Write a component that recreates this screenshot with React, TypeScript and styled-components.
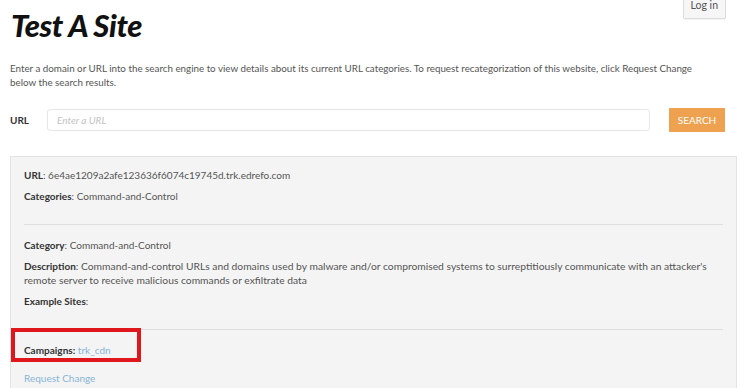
import styled, { createGlobalStyle } from 'styled-components';

const GlobalStyle = createGlobalStyle`
  body {
    margin: 0;
    background: #fff;
    font-family: Lato, "Open Sans", sans-serif;
    color: #555;
  }
`;

const Page = styled.div`
  padding: 0 8px 0 10px;
  overflow: hidden;
  height: 388px;
`;

const Header = styled.div`
  display: flex;
  justify-content: space-between;
  align-items: flex-start;
  padding-right: 11px;
`;

const Title = styled.h1`
  margin: 6px 0 0 1px;
  font-size: 31px;
  line-height: 38px;
  font-weight: 900;
  font-style: italic;
  letter-spacing: -0.4px;
  color: #111;
`;

const LogIn = styled.button`
  display: flex;
  align-items: flex-end;
  margin-top: -14px;
  height: 33px;
  padding: 0 7px 7px;
  border: 1px solid #dcdcdc;
  border-radius: 2px;
  background: #f6f6f6;
  box-shadow: 0 1px 1px rgba(0, 0, 0, 0.05);
  font-family: inherit;
  font-size: 10.5px;
  color: #555;
`;

const Intro = styled.p`
  margin: 17px 0 0;
  max-width: 700px;
  font-size: 9.8px;
  line-height: 14px;
  color: #555;
`;

const SearchRow = styled.div`
  display: flex;
  align-items: center;
  margin-top: 19px;
  padding-right: 12px;
`;

const Label = styled.label`
  width: 37px;
  font-size: 10px;
  font-weight: 700;
  color: #333;
`;

const UrlInput = styled.input`
  flex: 1;
  height: 22px;
  box-sizing: border-box;
  padding: 0 9px;
  border: 1px solid #e6e6e6;
  border-radius: 3px;
  font-family: inherit;
  font-size: 10px;
  &::placeholder {
    color: #c4c4c4;
    font-style: italic;
  }
`;

const SearchButton = styled.button`
  margin-left: 19px;
  width: 56px;
  height: 24px;
  border: none;
  border-radius: 1px;
  background: #eea24f;
  color: #fff;
  font-family: inherit;
  font-size: 10px;
  text-transform: uppercase;
`;

const Panel = styled.div`
  margin-top: 24px;
  padding: 11px 13px 20px;
  background: #f4f4f4;
  border: 1px solid #e4e4e4;
`;

const Line = styled.p<{ $wide?: boolean }>`
  position: relative;
  margin: 0 0 7px;
  max-width: ${(p) => (p.$wide ? '696px' : 'none')};
  font-size: ${(p) => (p.$wide ? '10.3px' : '10px')};
  line-height: 14px;
  color: #555;
  & b {
    font-size: 10px;
    color: #333;
  }
`;

const Rule = styled.hr`
  margin: 21px 0 13px;
  border: none;
  border-top: 1px solid #dedede;
`;

const Link = styled.a`
  color: #88b4d8;
  text-decoration: none;
`;

const Highlight = styled.span`
  position: absolute;
  left: -13px;
  top: -15px;
  width: 130px;
  height: 34px;
  box-sizing: border-box;
  border: 4px solid #e0161d;
`;

const Footer = styled.p`
  margin: 14px 0 0;
  font-size: 10px;
  line-height: 14px;
`;

export default function App() {
  return (
    <>
      <GlobalStyle />
      <Page>
        <Header>
          <Title>Test A Site</Title>
          <LogIn>Log in</LogIn>
        </Header>
        <Intro>
          Enter a domain or URL into the search engine to view details about its current URL
          categories. To request recategorization of this website, click Request Change below the
          search results.
        </Intro>
        <SearchRow>
          <Label>URL</Label>
          <UrlInput placeholder="Enter a URL" />
          <SearchButton>Search</SearchButton>
        </SearchRow>
        <Panel>
          <Line>
            <b>URL</b>: 6e4ae1209a2afe123636f6074c19745d.trk.edrefo.com
          </Line>
          <Line>
            <b>Categories</b>: Command-and-Control
          </Line>
          <Rule />
          <Line>
            <b>Category</b>: Command-and-Control
          </Line>
          <Line $wide>
            <b>Description</b>: Command-and-control URLs and domains used by malware and/or
            compromised systems to surreptitiously communicate with an attacker's remote server to
            receive malicious commands or exfiltrate data
          </Line>
          <Line>
            <b>Example Sites</b>:
          </Line>
          <Rule />
          <Line>
            <Highlight />
            <b>Campaigns:</b> <Link>trk_cdn</Link>
          </Line>
          <Footer>
            <Link>Request Change</Link>
          </Footer>
        </Panel>
      </Page>
    </>
  );
}
